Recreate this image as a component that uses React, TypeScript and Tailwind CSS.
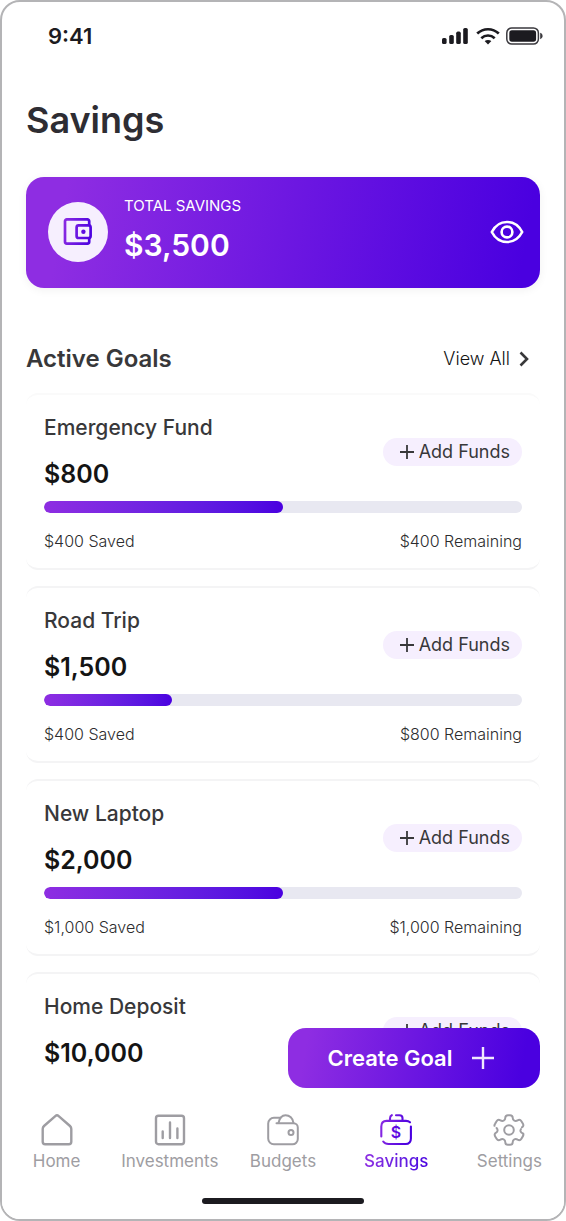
import React, { useState } from 'react';

interface Goal {
  name: string;
  target: string;
  percent: number;
  saved?: string;
  remaining?: string;
}

const goals: Goal[] = [
  { name: 'Emergency Fund', target: '$800', saved: '$400', remaining: '$400', percent: 50 },
  { name: 'Road Trip', target: '$1,500', saved: '$400', remaining: '$800', percent: 26.7 },
  { name: 'New Laptop', target: '$2,000', saved: '$1,000', remaining: '$1,000', percent: 50 },
  { name: 'Home Deposit', target: '$10,000', percent: 0 },
];

const BrandGradient: React.FC<{ id: string }> = ({ id }) => (
  <defs>
    <linearGradient id={id} x1="0" y1="0" x2="32" y2="6" gradientUnits="userSpaceOnUse">
      <stop stopColor="#8e2de2" />
      <stop offset="1" stopColor="#4a00e0" />
    </linearGradient>
  </defs>
);

const SignalIcon = () => (
  <svg width="28" height="18" viewBox="0 0 28 18" fill="#1c1b20" aria-hidden="true">
    <rect x="0" y="11" width="4.6" height="6" rx="1.6" />
    <rect x="7.2" y="8" width="4.6" height="9" rx="1.6" />
    <rect x="14.2" y="4.6" width="4.6" height="12.4" rx="1.6" />
    <rect x="21.2" y="1" width="4.6" height="16" rx="1.6" />
  </svg>
);

const WifiIcon = () => (
  <svg width="24" height="18" viewBox="0 0 24 18" fill="none" stroke="#1c1b20" strokeWidth="2.7" aria-hidden="true">
    <path d="M1.2 6.6C7.4 .8 16.6 .8 22.8 6.6" />
    <path d="M5.3 11.2C9.2 7.6 14.8 7.6 18.7 11.2" />
    <path d="M8.6 14.1C10.6 12.5 13.4 12.5 15.4 14.1L12 17.5Z" fill="#1c1b20" stroke="none" />
  </svg>
);

const BatteryIcon = () => (
  <svg width="38" height="18" viewBox="0 0 38 18" fill="none" aria-hidden="true">
    <rect x="0.8" y="0.9" width="31.6" height="16.200" rx="5" stroke="#3a393e" strokeWidth="1.5" />
    <rect x="3.3" y="3.3" width="26.8" height="11.4" rx="2.6" fill="#1c1b20" />
    <path d="M34.2 5.8c3.200 1.200 3.200 5.200 0 6.400z" fill="#3a393e" />
  </svg>
);

const WalletIcon = () => (
  <svg width="30" height="30" viewBox="0 0 30 30" fill="none" stroke="url(#wallet)" strokeWidth="2.7" strokeLinejoin="round" aria-hidden="true">
    <BrandGradient id="wallet" />
    <path d="M26.2 8.8V4.2a1.8 1.8 0 0 0-1.8-1.8H3.8A1.8 1.8 0 0 0 2 4.2v20.6a1.8 1.8 0 0 0 1.8 1.8h20.6a1.8 1.8 0 0 0 1.8-1.8v-4.2" />
    <rect x="13.6" y="8.4" width="14" height="12.6" rx="2" />
    <circle cx="20.4" cy="14.7" r="2.2" fill="url(#wallet)" stroke="none" />
  </svg>
);

const EyeIcon = () => (
  <svg width="34" height="24" viewBox="0 0 34 24" fill="none" stroke="#fff" strokeWidth="2.6" aria-hidden="true">
    <path d="M1.8 12C4.6 6.6 10 2 17 2s12.400 4.600 15.200 10C29.400 17.400 24 22 17 22S4.600 17.400 1.800 12Z" strokeLinejoin="round" />
    <circle cx="17" cy="12" r="5.400" />
  </svg>
);

const HomeIcon = () => (
  <svg width="32" height="32" viewBox="0 0 32 32" fill="none" stroke="#9e9da2" strokeWidth="2.4" strokeLinejoin="round" aria-hidden="true">
    <path d="M14.300 2.100 3 12a4 4 0 0 0-1.300 3v12.800A2.500 2.500 0 0 0 4.200 30.300h23.600a2.500 2.500 0 0 0 2.500-2.500V15a4 4 0 0 0-1.300-3L17.700 2.100a2.600 2.600 0 0 0-3.400 0Z" />
  </svg>
);

const InvestmentsIcon = () => (
  <svg width="32" height="32" viewBox="0 0 32 32" fill="none" stroke="#9e9da2" strokeWidth="2.4" strokeLinecap="round" aria-hidden="true">
    <rect x="2" y="1.800" width="28" height="28.400" rx="2.500" />
    <path d="M8.700 17.500v6.500M16 8.500V24M23.400 14.500V24" />
  </svg>
);

const BudgetsIcon = () => (
  <svg width="32" height="32" viewBox="0 0 32 32" fill="none" stroke="#9e9da2" strokeWidth="2" strokeLinecap="round" aria-hidden="true">
    <path d="M13.500 3.800H7A5.700 5.700 0 0 0 1.200 9.500v15A5.700 5.700 0 0 0 7 30.300h18.500a5.300 5.300 0 0 0 5.300-5.300V13.500A4.300 4.300 0 0 0 26.500 9.200H9.500" />
    <path d="M11.500 9C12.500 4 14.500 1.200 18.500 1.200S26 4.300 26.500 9" />
    <circle cx="24" cy="18.500" r="2.500" />
  </svg>
);

const SavingsIcon = () => (
  <svg width="32" height="32" viewBox="0 0 32 32" fill="none" stroke="url(#savings)" strokeWidth="2.100" strokeLinecap="round" aria-hidden="true">
    <BrandGradient id="savings" />
    <path d="M1.300 22.500V12.500C1.300 9 3 6.900 6.500 6.900H26q2.500 0 4 1.400" />
    <path d="M30.900 12.500V24.500C30.900 28 29 30 25.500 30H8.500Q5 30 3.200 27.500" />
    <path d="M10 6.500V4.500Q10 2 11.800 1.200M16 1.200H19.500Q22.500 1.200 22.500 4V6.500" />
    <text x="16" y="24" textAnchor="middle" fontSize="16" fontWeight="600" fill="#5f0be1" stroke="none">
      $
    </text>
  </svg>
);

const SettingsIcon = () => (
  <svg width="32" height="32" viewBox="0 0 32 32" fill="none" stroke="#9e9da2" strokeWidth="2" strokeLinecap="round" aria-hidden="true">
    <path d="M1.500 11.800Q1.200 11 2.200 9.600L3.600 7.300Q5 5 7.400 6.300C9.600 7.700 12.300 6.600 12.300 3.800Q12.300 1.200 15 1.200H17Q19.700 1.200 19.700 3.800C19.700 6.600 22.400 7.700 24.600 6.300Q27 5 28.400 7.300L29.800 9.600Q31.200 12 28.900 13.300" />
    <path d="M30.200 19.700Q30.800 20.800 29.800 22.400L28.400 24.700Q27 27 24.600 25.700C22.400 24.300 19.700 25.400 19.700 28.200Q19.700 30.800 17 30.800H15Q12.300 30.800 12.300 28.200C12.300 25.400 9.600 24.300 7.400 25.700Q5 27 3.600 24.700L2.200 22.400Q.8 20 3.100 18.700C5 17.500 5 15.500 3.600 14" />
    <path d="M30.200 19.700C27.200 18.300 26.800 16.600 28 15" />
    <circle cx="16" cy="16" r="4.800" />
  </svg>
);

const navItems = [
  { label: 'Home', icon: <HomeIcon /> },
  { label: 'Investments', icon: <InvestmentsIcon /> },
  { label: 'Budgets', icon: <BudgetsIcon /> },
  { label: 'Savings', icon: <SavingsIcon />, active: true },
  { label: 'Settings', icon: <SettingsIcon /> },
];

const GoalCard: React.FC<{ goal: Goal }> = ({ goal }) => (
  <li className="rounded-xl border-y-2 border-[#f4f4f5] first:border-t-[#fafafa] bg-white px-[18px] pt-[19px] pb-[15px]">
    <div className="flex items-center justify-between">
      <div>
        <h3 className="text-[21px] leading-7 font-medium text-[#38383a]">{goal.name}</h3>
        <p className="mt-4 text-[25px] leading-8 font-semibold text-[#141414]">{goal.target}</p>
      </div>
      <button
        type="button"
        className="flex h-7 items-center gap-1 rounded-full bg-[#f6effe] pr-3 pl-4 text-lg text-[#38383a]"
      >
        <svg width="16" height="16" viewBox="0 0 16 16" stroke="currentColor" strokeWidth="1.800" aria-hidden="true">
          <path d="M8 1v14M1 8h14" />
        </svg>
        Add Funds
      </button>
    </div>

    <div className="mt-[11px] h-3 overflow-hidden rounded-full bg-[#e8e8f1]">
      <div
        className="h-full rounded-full bg-linear-to-r from-[#8e2de2] to-[#4a00e0]"
        style={{ width: `${goal.percent}%` }}
      />
    </div>

    {goal.saved && (
      <div className="mt-4 flex justify-between text-base leading-6 font-light text-[#2c2c2e]">
        <span>{goal.saved} Saved</span>
        <span>{goal.remaining} Remaining</span>
      </div>
    )}
  </li>
);

const App: React.FC = () => {
  const [showTotal, setShowTotal] = useState(true);

  return (
    <div className="flex h-screen flex-col overflow-hidden rounded-[20px] border-2 border-[#b4b4b6] bg-white font-['Inter','Liberation_Sans',sans-serif]">
      {/* Status bar */}
      <div className="flex h-12 shrink-0 items-center justify-between pt-5 pr-5 pl-[46px]">
        <span className="text-[22px] leading-7 font-semibold text-[#1c1b20]">9:41</span>
        <div className="flex items-center gap-1.5">
          <SignalIcon />
          <WifiIcon />
          <BatteryIcon />
        </div>
      </div>

      <main className="min-h-0 flex-1 overflow-y-auto px-6 pt-12 [scrollbar-width:none]">
        <h1 className="text-4xl leading-[44px] font-semibold text-[#2e2d33]">Savings</h1>

        <section className="mt-[35px] flex h-[111px] items-center rounded-[18px] bg-[linear-gradient(100deg,#8e2de2_8%,#4a00e0_96%)] pr-4 pb-0.5 pl-[22px] text-white shadow-[0_2px_10px_rgba(0,0,0,0.06)]">
          <div className="flex size-[60px] shrink-0 items-center justify-center rounded-full bg-[#f6effe]">
            <WalletIcon />
          </div>
          <div className="ml-4 flex-1 pb-1">
            <p className="text-[15px] leading-6">TOTAL SAVINGS</p>
            <p className="mt-[7px] text-3xl leading-10 font-semibold">{showTotal ? '$3,500' : '••••••'}</p>
          </div>
          <button type="button" aria-label="Toggle total savings" onClick={() => setShowTotal(!showTotal)}>
            <EyeIcon />
          </button>
        </section>

        <div className="mt-[55px] flex items-center justify-between pr-2.5">
          <h2 className="text-2xl leading-8 font-semibold text-[#38383a]">Active Goals</h2>
          <a href="#goals" className="flex items-center gap-2 text-lg leading-7 font-light text-[#141414]">
            View All
            <svg width="12" height="16" viewBox="0 0 12 16" fill="none" stroke="#38383a" strokeWidth="2.600" aria-hidden="true">
              <path d="M2.500 1.500 9 8l-6.500 6.500" />
            </svg>
          </a>
        </div>

        <ul id="goals" className="mt-[18px] flex flex-col gap-4">
          {goals.map((goal) => (
            <GoalCard key={goal.name} goal={goal} />
          ))}
        </ul>
      </main>

      <div className="relative shrink-0 bg-white">
        {/* Floating action, overlaps the end of the list */}
        <button
          type="button"
          className="absolute -top-[52px] right-6 flex h-[60px] w-[252px] items-center justify-center gap-5 rounded-[18px] bg-[linear-gradient(100deg,#8e2de2_8%,#4a00e0_92%)] pr-1.5 text-[22px] font-semibold text-white"
        >
          Create Goal
          <svg width="22" height="22" viewBox="0 0 22 22" stroke="#f0e8fd" strokeWidth="2.400" aria-hidden="true">
            <path d="M11 0v22M0 11h22" />
          </svg>
        </button>

        <nav className="-mx-0.5 grid grid-cols-5 pt-[34px]">
          {navItems.map((item) => (
            <a key={item.label} href={`#${item.label.toLowerCase()}`} className="flex flex-col items-center gap-[3px]">
              {item.icon}
              <span
                className={
                  item.active
                    ? 'bg-linear-to-r from-[#8e2de2] to-[#4a00e0] bg-clip-text text-[17px] leading-6 font-medium text-transparent'
                    : 'text-[17px] leading-6 text-[#9e9da2]'
                }
              >
                {item.label}
              </span>
            </a>
          ))}
        </nav>

        <div className="mx-auto mt-[25px] mb-[15px] h-1.5 w-[162px] rounded-full bg-[#1c1b20]" />
      </div>
    </div>
  );
};

export default App;
